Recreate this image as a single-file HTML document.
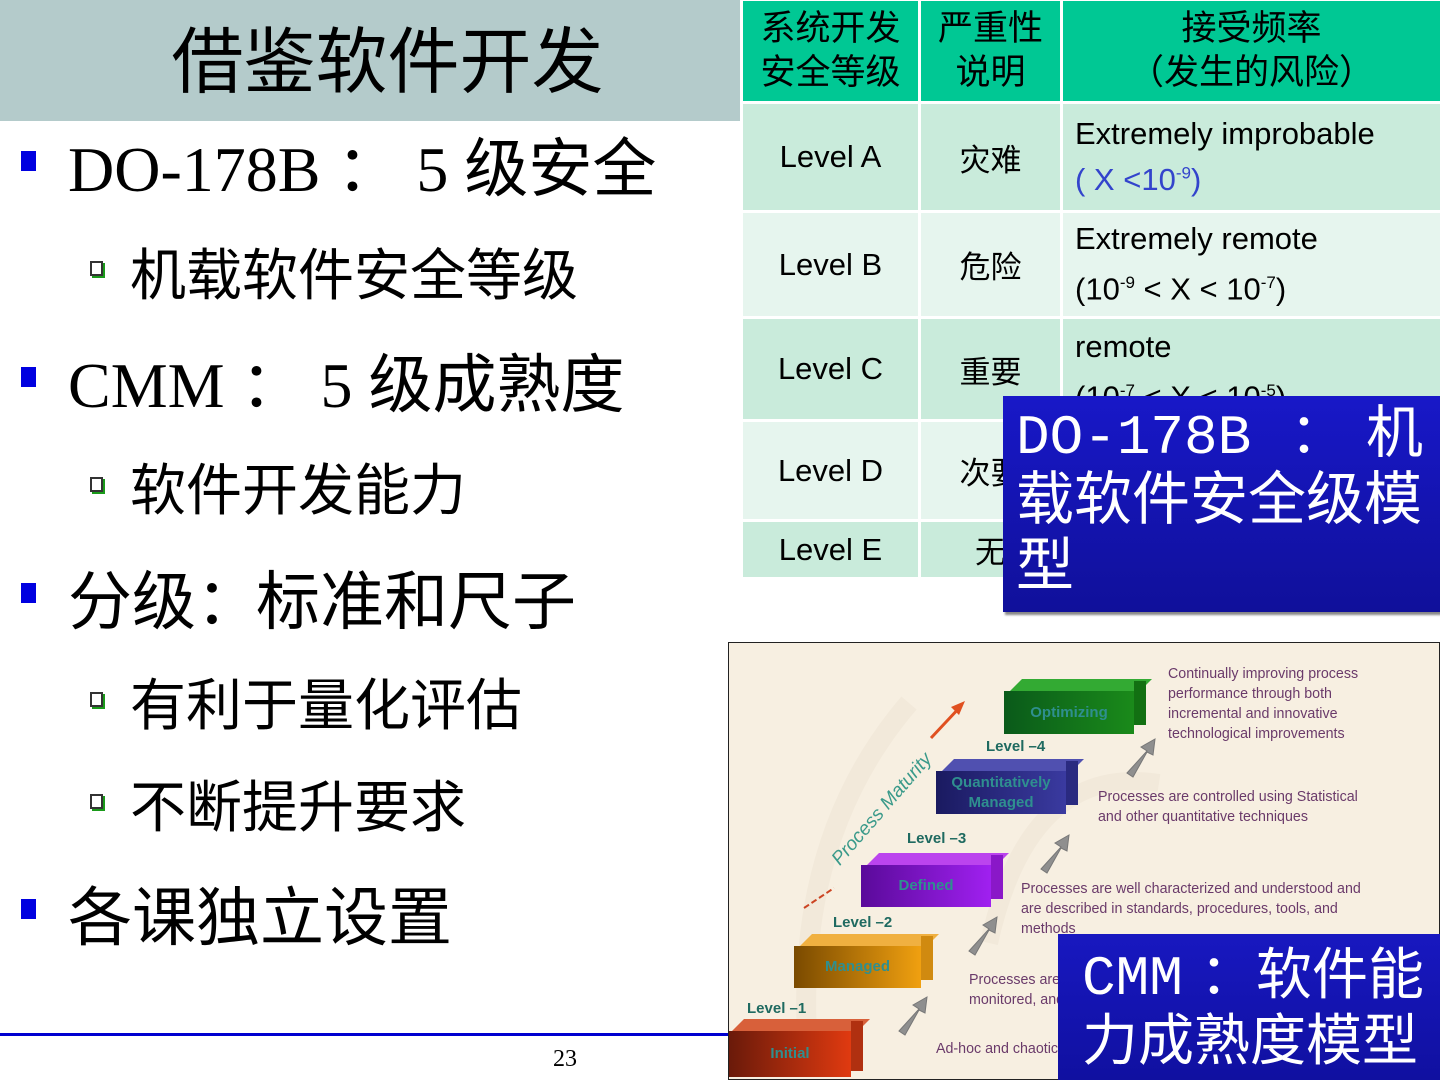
<!DOCTYPE html>
<html style="width:1440px;height:1080px;overflow:hidden"><head><meta charset="utf-8"><style>
*{margin:0;padding:0;box-sizing:border-box}
body{width:1440px;height:1080px;position:relative;overflow:hidden;background:#fff;font-family:"Liberation Sans","Noto Sans CJK SC",sans-serif;color:#000}
.a{position:absolute;white-space:nowrap}
.cjk{font-family:"Liberation Serif","Noto Sans CJK SC",sans-serif}
.b1{position:absolute;left:21px;width:15px;height:20px;background:#0000e0}
.b2{position:absolute;left:90px;width:13px;height:15px;border:2px solid #333;box-shadow:2px 2px 0 #1a9a1a;background:#fff}
td{border:3px solid #fff;text-align:center;font-size:31px;vertical-align:middle}
.bx{position:absolute}
.sm{font-size:15px;color:#6a3a6a;line-height:20px;position:absolute;white-space:nowrap;font-family:"Liberation Sans",sans-serif;transform:scaleX(.95);transform-origin:left}
.lv{position:absolute;font-size:15px;font-weight:bold;color:#1f6a60;white-space:nowrap}
.face{position:absolute;font-weight:bold;color:#2f8f8f;font-size:15px;text-align:center;display:flex;align-items:center;justify-content:center;line-height:20px}
.w{position:absolute;color:#fff;white-space:nowrap;font-family:'Liberation Mono','Noto Sans CJK SC',monospace}
</style></head><body>
<div class="a" style="left:0;top:0;width:741px;height:121px;background:#b4cbcb"></div>
<div class="a" style="left:0;top:0;width:741px;height:121px;text-align:center;line-height:126px;font-size:72px;padding-left:34px">借鉴软件开发</div>

<div class="b1" style="top:151px"></div>
<div class="a cjk" style="left:68px;top:130px;font-size:64px;line-height:80px">DO-178B ： 5 级安全</div>
<div class="b2" style="top:261px"></div>
<div class="a" style="left:130px;top:240px;font-size:56px;line-height:72px">机载软件安全等级</div>
<div class="b1" style="top:367px"></div>
<div class="a cjk" style="left:68px;top:346px;font-size:64px;line-height:80px">CMM ： 5 级成熟度</div>
<div class="b2" style="top:477px"></div>
<div class="a" style="left:130px;top:455px;font-size:56px;line-height:72px">软件开发能力</div>
<div class="b1" style="top:583px"></div>
<div class="a" style="left:68px;top:562px;font-size:64px;line-height:80px">分级<span style="letter-spacing:-4px">：</span>标准和尺子</div>
<div class="b2" style="top:692px"></div>
<div class="a" style="left:130px;top:670px;font-size:56px;line-height:72px">有利于量化评估</div>
<div class="b2" style="top:794px"></div>
<div class="a" style="left:130px;top:772px;font-size:56px;line-height:72px">不断提升要求</div>
<div class="b1" style="top:899px"></div>
<div class="a" style="left:68px;top:878px;font-size:64px;line-height:80px">各课独立设置</div>

<div class="a" style="left:0;top:1033px;width:728px;height:3px;background:#0000d0"></div>
<div class="a" style="left:553px;top:1046px;font-family:'Liberation Serif',serif;font-size:24px">23</div>

<table class="a" style="left:740px;top:-2px;border-collapse:collapse;width:703px">
<tr style="height:103px;background:#00c894"><td style="width:178px;font-size:35px;line-height:44px">系统开发<br>安全等级</td><td style="width:142px;font-size:35px;line-height:44px">严重性<br>说明</td><td style="font-size:35px;line-height:44px">接受频率<br>（发生的风险）</td></tr>
<tr style="height:109px;background:#c9ebdb"><td>Level A</td><td>灾难</td><td style="text-align:left;padding-left:12px;line-height:40px">Extremely improbable<br><span style="color:#3344cc">( X &lt;10<sup style="font-size:17px">-9</sup>)</span></td></tr>
<tr style="height:106px;background:#e6f5ee"><td>Level B</td><td>危险</td><td style="text-align:left;padding-left:12px;line-height:44px">Extremely remote<br>(10<sup style="font-size:17px">-9</sup> &lt; X &lt; 10<sup style="font-size:17px">-7</sup>)</td></tr>
<tr style="height:102px;background:#c9ebdb"><td>Level C</td><td>重要</td><td style="text-align:left;padding-left:12px;line-height:44px;vertical-align:top;padding-top:6px">remote<br>(10<sup style="font-size:17px">-7</sup> &lt; X &lt; 10<sup style="font-size:17px">-5</sup>)</td></tr>
<tr style="height:100px;background:#e6f5ee"><td>Level D</td><td>次要</td><td></td></tr>
<tr style="height:58px;background:#c9ebdb"><td>Level E</td><td>无</td><td></td></tr>
</table>

<div class="a" style="left:1003px;top:396px;width:437px;height:216px;background:linear-gradient(#1818c8,#10109a);box-shadow:2px 3px 2px #888"></div>
<div class="w" style="left:1016px;top:405px;font-size:56px;line-height:66px">DO-178B</div>
<div class="w" style="left:1290px;top:405px;font-size:56px;line-height:66px">：</div>
<div class="w" style="left:1366px;top:405px;font-size:57px;line-height:66px">机</div>
<div class="w" style="left:1016px;top:472px;font-size:58px;line-height:66px">载软件安全级模</div>
<div class="w" style="left:1016px;top:538px;font-size:58px;line-height:66px">型</div>

<div class="a" style="left:728px;top:642px;width:712px;height:438px;background:#f7efe1;border:1px solid #222;overflow:hidden">
 <svg width="712" height="438" style="position:absolute;left:0;top:0">
  <path d="M80 420 Q60 200 180 60" stroke="#f2e9da" stroke-width="20" fill="none"/>
  <path d="M260 300 Q300 120 430 140" stroke="#f2e9da" stroke-width="18" fill="none"/>
  <line x1="75" y1="265" x2="105" y2="245" stroke="#cc4422" stroke-width="2" stroke-dasharray="6 3"/>
  <line x1="202" y1="95" x2="232" y2="63" stroke="#e05020" stroke-width="3"/>
  <polygon points="236,58 222,64 230,72" fill="#e05020"/>
  <g fill="#8f8f8f" stroke="#777">
   <polygon points="170,388 190,366 184,362 198,354 196,370 190,367 176,392"/>
   <polygon points="240,308 260,286 254,282 268,274 266,290 260,287 246,312"/>
   <polygon points="312,226 332,204 326,200 340,192 338,208 332,205 318,230"/>
   <polygon points="398,130 418,108 412,104 426,96 424,112 418,109 404,134"/>
  </g>
 </svg>
 <div class="a" style="left:107px;top:210px;transform:rotate(-49deg);transform-origin:left center;color:#3a9a8a;font-style:italic;font-size:19px;line-height:20px">Process Maturity</div>

 <div class="bx" style="left:9px;top:376px;width:126px;height:12px;background:#d8603a;transform:skewX(-45deg)"></div>
 <div class="face" style="left:0;top:388px;width:122px;height:46px;background:linear-gradient(90deg,#6a1a0a,#e03a10)">Initial</div>
 <div class="bx" style="left:122px;top:378px;width:12px;height:50px;background:#b03010"></div>

 <div class="bx" style="left:77px;top:291px;width:127px;height:12px;background:#f0b040;transform:skewX(-45deg)"></div>
 <div class="face" style="left:65px;top:303px;width:127px;height:42px;background:linear-gradient(90deg,#7a4a00,#f0a010)">Managed</div>
 <div class="bx" style="left:192px;top:293px;width:12px;height:44px;background:#d08a10"></div>

 <div class="bx" style="left:144px;top:210px;width:130px;height:12px;background:#bb44ee;transform:skewX(-45deg)"></div>
 <div class="face" style="left:132px;top:222px;width:130px;height:42px;background:linear-gradient(90deg,#5a0a9a,#a020f0)">Defined</div>
 <div class="bx" style="left:262px;top:212px;width:12px;height:44px;background:#8a18c8"></div>

 <div class="bx" style="left:219px;top:116px;width:130px;height:12px;background:#5050b0;transform:skewX(-45deg)"></div>
 <div class="face" style="left:207px;top:128px;width:130px;height:43px;background:linear-gradient(90deg,#1a1a60,#3a3aa0)">Quantitatively<br>Managed</div>
 <div class="bx" style="left:337px;top:118px;width:12px;height:44px;background:#2a2a80"></div>

 <div class="bx" style="left:287px;top:36px;width:130px;height:12px;background:#33aa33;transform:skewX(-45deg)"></div>
 <div class="face" style="left:275px;top:48px;width:130px;height:43px;background:linear-gradient(90deg,#0a5a1a,#1a8a1a)">Optimizing</div>
 <div class="bx" style="left:405px;top:38px;width:12px;height:44px;background:#127012"></div>

 <div class="lv" style="left:18px;top:357px">Level –1</div>
 <div class="lv" style="left:104px;top:271px">Level –2</div>
 <div class="lv" style="left:178px;top:187px">Level –3</div>
 <div class="lv" style="left:257px;top:95px">Level –4</div>

 <div class="sm" style="left:439px;top:21px">Continually improving process<br>performance through both<br>incremental and innovative<br>technological improvements</div>
 <div class="sm" style="left:369px;top:144px">Processes are controlled using Statistical<br>and other quantitative techniques</div>
 <div class="sm" style="left:292px;top:236px">Processes are well characterized and understood and<br>are described in standards, procedures, tools, and<br>methods</div>
 <div class="sm" style="left:240px;top:327px">Processes are planned, documented, performed,<br>monitored, and controlled</div>
 <div class="sm" style="left:207px;top:396px">Ad-hoc and chaotic processes</div>
</div>

<div class="a" style="left:1058px;top:934px;width:382px;height:146px;background:linear-gradient(#1818c0,#1010a0)"></div>
<div class="w" style="left:1082px;top:946px;font-size:56px;line-height:66px">CMM</div>
<div class="w" style="left:1200px;top:946px;font-size:56px;line-height:66px">：软件能</div>
<div class="w" style="left:1082px;top:1012px;font-size:56px;line-height:66px">力成熟度模型</div>
</body></html>
